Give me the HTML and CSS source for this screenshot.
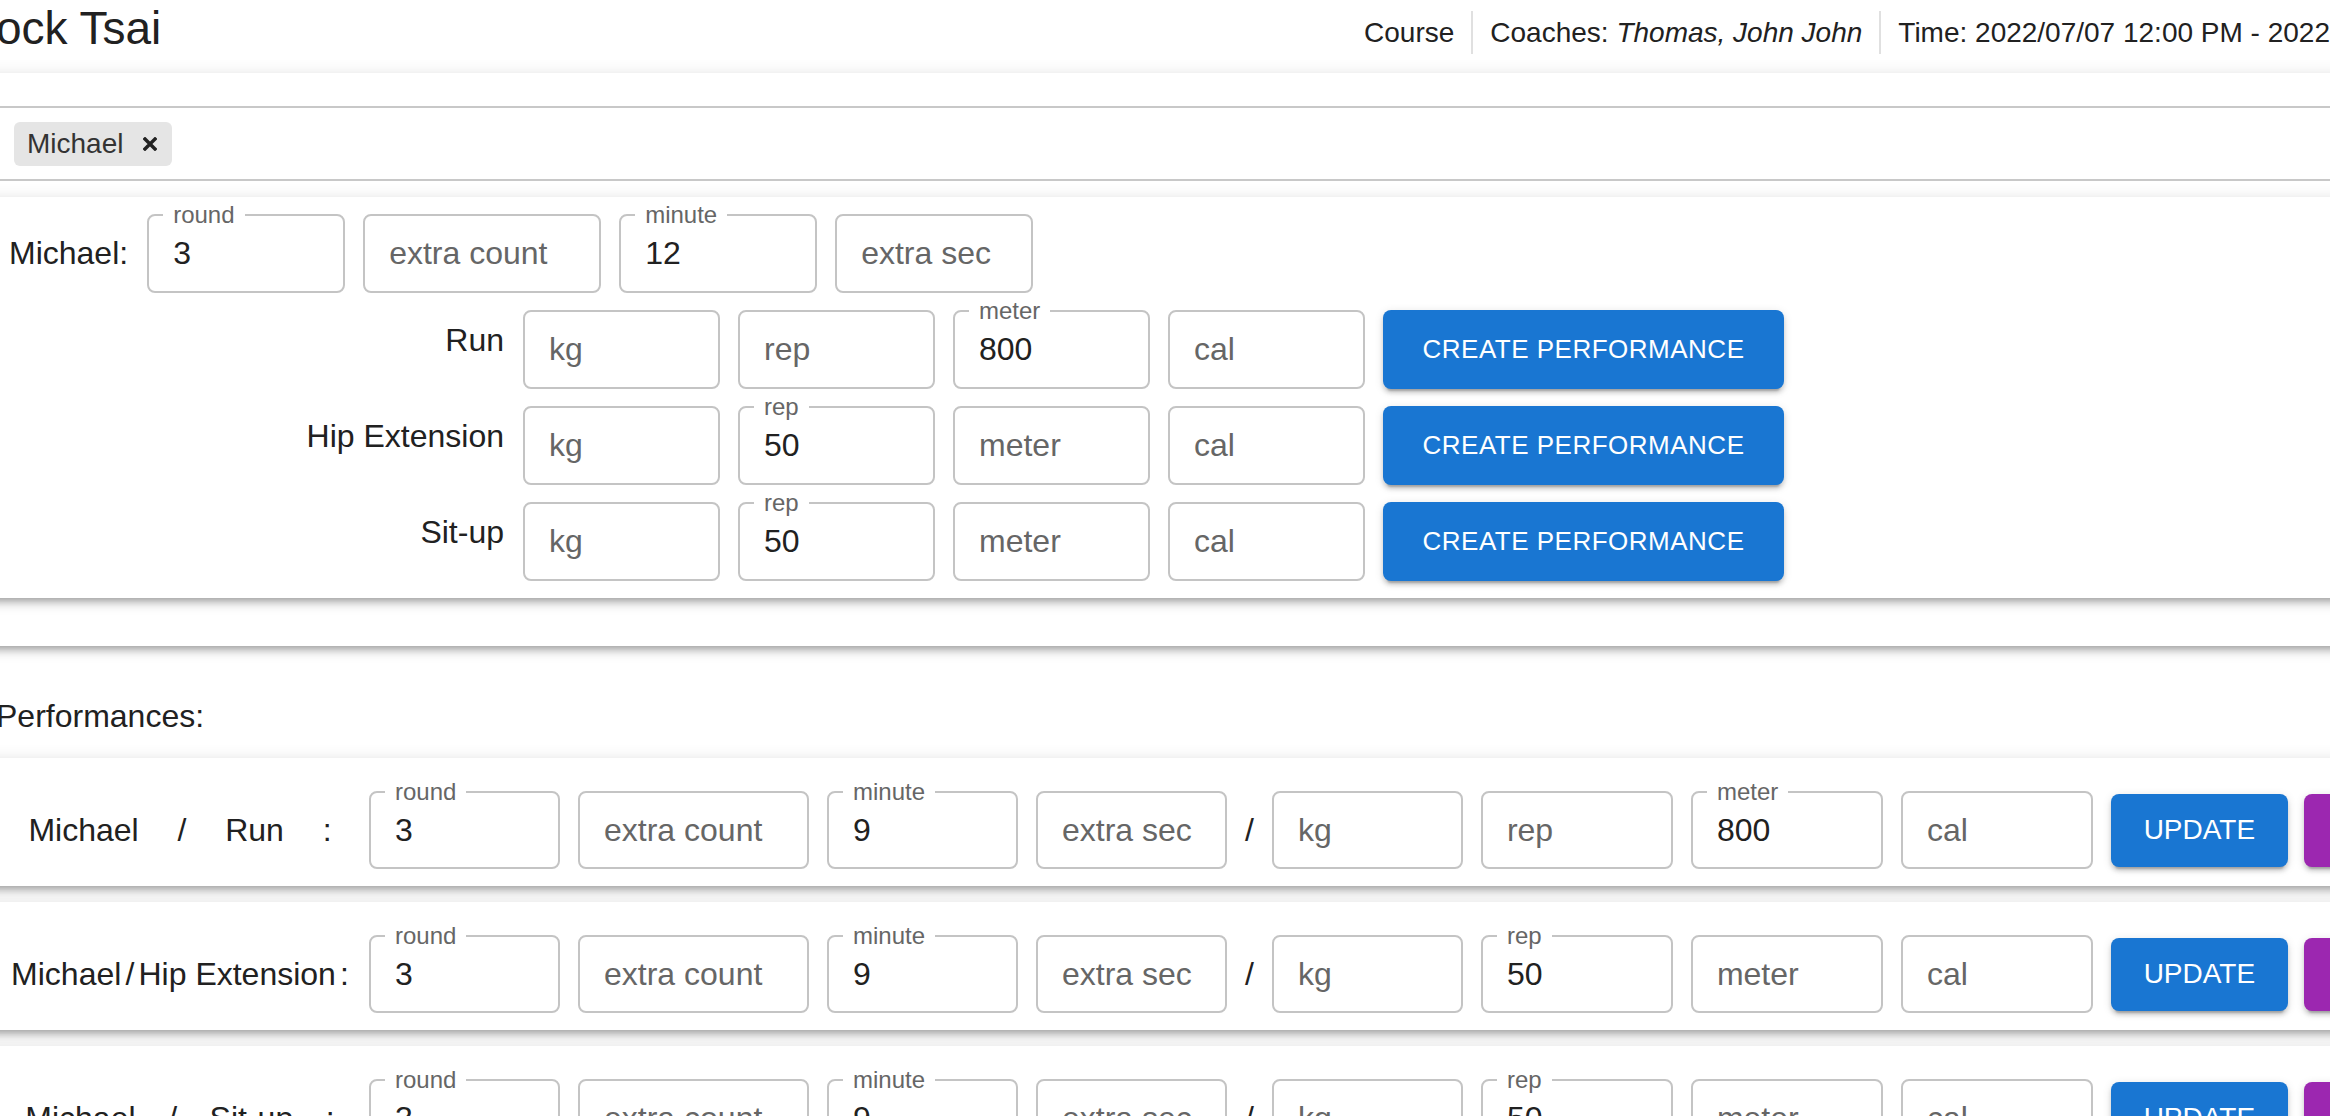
FILE: index.html
```html
<!DOCTYPE html>
<html lang="en">
<head>
<meta charset="utf-8">
<title>Course</title>
<link rel="stylesheet" href="styles.css">
</head>
<body>
<header class="topbar">
  <h1 class="title">ock Tsai</h1>
  <div class="meta">
    <span class="meta-item">Course</span>
    <span class="meta-item">Coaches: <em>Thomas, John John</em></span>
    <span class="meta-item">Time: 2022/07/07 12:00 PM - 2022</span>
  </div>
</header>
<main class="page">
  <section class="paper outer">
    <div class="autocomplete">
      <span class="chip">Michael<svg class="chip-x" width="14" height="14" viewBox="0 0 14 14"><path d="M2 2 L12 12 M12 2 L2 12" stroke="#222" stroke-width="3.4" stroke-linecap="square" fill="none"/></svg></span>
    </div>
    <div class="paper inner">
      <div class="row">
        <span class="athlete-label">Michael:</span>
        <div class="field w198"><span class="fl">round</span><span class="fv">3</span></div>
        <div class="field w238"><span class="fp">extra count</span></div>
        <div class="field w198"><span class="fl">minute</span><span class="fv">12</span></div>
        <div class="field w198"><span class="fp">extra sec</span></div>
      </div>
      <div class="row">
        <span class="ex-label">Run</span>
        <div class="field w197"><span class="fp">kg</span></div>
        <div class="field w197"><span class="fp">rep</span></div>
        <div class="field w197"><span class="fl">meter</span><span class="fv">800</span></div>
        <div class="field w197"><span class="fp">cal</span></div>
        <button class="btn btn-create">Create Performance</button>
      </div>
      <div class="row">
        <span class="ex-label">Hip Extension</span>
        <div class="field w197"><span class="fp">kg</span></div>
        <div class="field w197"><span class="fl">rep</span><span class="fv">50</span></div>
        <div class="field w197"><span class="fp">meter</span></div>
        <div class="field w197"><span class="fp">cal</span></div>
        <button class="btn btn-create">Create Performance</button>
      </div>
      <div class="row">
        <span class="ex-label">Sit-up</span>
        <div class="field w197"><span class="fp">kg</span></div>
        <div class="field w197"><span class="fl">rep</span><span class="fv">50</span></div>
        <div class="field w197"><span class="fp">meter</span></div>
        <div class="field w197"><span class="fp">cal</span></div>
        <button class="btn btn-create">Create Performance</button>
      </div>
    </div>
  </section>

  <h2 class="perf-title">Performances:</h2>

  <div class="paper perf-card">
    <div class="perf-name"><span>Michael</span><span>/</span><span>Run</span><span>:</span></div>
    <div class="field pf w191"><span class="fl">round</span><span class="fv">3</span></div>
    <div class="field pf w231"><span class="fp">extra count</span></div>
    <div class="field pf w191"><span class="fl">minute</span><span class="fv">9</span></div>
    <div class="field pf w191"><span class="fp">extra sec</span></div>
    <span class="slash">/</span>
    <div class="field pf w191"><span class="fp">kg</span></div>
    <div class="field pf w192"><span class="fp">rep</span></div>
    <div class="field pf w192"><span class="fl">meter</span><span class="fv">800</span></div>
    <div class="field pf w192"><span class="fp">cal</span></div>
    <button class="btn btn-update">Update</button>
    <button class="btn btn-delete" aria-label="delete"></button>
  </div>

  <div class="paper perf-card">
    <div class="perf-name"><span>Michael</span><span>/</span><span>Hip Extension</span><span>:</span></div>
    <div class="field pf w191"><span class="fl">round</span><span class="fv">3</span></div>
    <div class="field pf w231"><span class="fp">extra count</span></div>
    <div class="field pf w191"><span class="fl">minute</span><span class="fv">9</span></div>
    <div class="field pf w191"><span class="fp">extra sec</span></div>
    <span class="slash">/</span>
    <div class="field pf w191"><span class="fp">kg</span></div>
    <div class="field pf w192"><span class="fl">rep</span><span class="fv">50</span></div>
    <div class="field pf w192"><span class="fp">meter</span></div>
    <div class="field pf w192"><span class="fp">cal</span></div>
    <button class="btn btn-update">Update</button>
    <button class="btn btn-delete" aria-label="delete"></button>
  </div>

  <div class="paper perf-card">
    <div class="perf-name"><span>Michael</span><span>/</span><span>Sit-up</span><span>:</span></div>
    <div class="field pf w191"><span class="fl">round</span><span class="fv">3</span></div>
    <div class="field pf w231"><span class="fp">extra count</span></div>
    <div class="field pf w191"><span class="fl">minute</span><span class="fv">9</span></div>
    <div class="field pf w191"><span class="fp">extra sec</span></div>
    <span class="slash">/</span>
    <div class="field pf w191"><span class="fp">kg</span></div>
    <div class="field pf w192"><span class="fl">rep</span><span class="fv">50</span></div>
    <div class="field pf w192"><span class="fp">meter</span></div>
    <div class="field pf w192"><span class="fp">cal</span></div>
    <button class="btn btn-update">Update</button>
    <button class="btn btn-delete" aria-label="delete"></button>
  </div>
</main>
</body>
</html>
```

FILE: styles.css
```css
* { box-sizing: border-box; }
html, body { margin: 0; padding: 0; }
body {
  width: 2330px;
  height: 1116px;
  overflow: hidden;
  background: #fff;
  color: #212121;
  font-family: "Liberation Sans", Arial, Helvetica, sans-serif;
}

/* header */
.topbar {
  display: flex;
  align-items: flex-start;
  height: 73px;
}
.title {
  margin: 0 0 0 -4px;
  font-size: 46px;
  font-weight: 400;
  line-height: 56px;
  white-space: nowrap;
}
.meta {
  margin-left: auto;
  margin-top: 11px;
  display: flex;
  white-space: nowrap;
}
.meta-item {
  font-size: 28px;
  line-height: 43px;
  padding: 0 17px;
}
.meta-item + .meta-item { border-left: 2px solid #e0e0e0; }
.meta-item:last-child { padding-right: 0; }

/* page */
.page { margin: 0 -400px 0 -40px; }
.paper {
  background: #fff;
  box-shadow: 0 6px 6px -4px rgba(0,0,0,0.2), 0 6px 8px 0 rgba(0,0,0,0.14), 0 2px 16px 0 rgba(0,0,0,0.12);
}
.outer { padding: 33px 20px 48px 20px; }

.autocomplete {
  display: flex;
  border: 2px solid #c8c8c8;
  border-radius: 8px;
  padding: 14px 0 13px 32px;
}
.chip {
  display: inline-flex;
  align-items: center;
  gap: 20px;
  height: 44px;
  padding: 0 15px 0 13px;
  background: #e5e5e5;
  border-radius: 6px;
  font-size: 28px;
  line-height: 44px;
  color: #333;
}
.chip-x { display: block; flex: none; }

.inner {
  margin-top: 16px;
  padding: 17px 0 17px 29px;
  display: flex;
  flex-direction: column;
  gap: 17px;
}
.row {
  display: flex;
  align-items: center;
  gap: 18px;
}
.athlete-label {
  font-size: 32px;
  margin-right: 1px;
  white-space: nowrap;
}
.ex-label {
  flex: none;
  width: 495px;
  margin-right: 1px;
  padding-bottom: 19px;
  text-align: right;
  font-size: 32px;
  white-space: nowrap;
}

/* outlined fields */
.field {
  position: relative;
  flex: none;
  height: 79px;
  display: flex;
  align-items: center;
  padding: 0 24px;
  border: 2px solid #c4c4c4;
  border-radius: 8px;
  background: #fff;
}
.field.pf { height: 78px; }
.w191 { width: 191px; }
.w192 { width: 192px; }
.w197 { width: 197px; }
.w198 { width: 198px; }
.w231 { width: 231px; }
.w238 { width: 238px; }
.fl {
  position: absolute;
  left: 14px;
  top: -13px;
  padding: 0 10px;
  background: #fff;
  font-size: 24px;
  line-height: 24px;
  color: #666;
  white-space: nowrap;
}
.fv { font-size: 32px; color: #212121; white-space: nowrap; }
.fp { font-size: 32px; color: #666; white-space: nowrap; }

/* buttons */
.btn {
  flex: none;
  border: none;
  padding: 0;
  border-radius: 8px;
  color: #fff;
  font-family: inherit;
  text-transform: uppercase;
  cursor: pointer;
  box-shadow: 0 6px 2px -4px rgba(0,0,0,0.2), 0 4px 4px 0 rgba(0,0,0,0.14), 0 2px 10px 0 rgba(0,0,0,0.12);
}
.btn-create {
  width: 401px;
  height: 79px;
  font-size: 26px;
  letter-spacing: 0.5px;
  background: #1976d2;
}
.btn-update {
  width: 177px;
  height: 73px;
  font-size: 28px;
  background: #1976d2;
}
.btn-delete {
  width: 200px;
  height: 73px;
  margin-left: -2px;
  background: #9c27b0;
}

/* performances */
.perf-title {
  margin: 52px 0 24px 36px;
  font-size: 32px;
  font-weight: 400;
  line-height: 36px;
}
.perf-card {
  height: 128px;
  margin-bottom: 16px;
  padding: 33px 0 17px 49px;
  display: flex;
  align-items: center;
  gap: 18px;
}
.perf-name {
  flex: none;
  width: 342px;
  display: flex;
  justify-content: space-around;
  font-size: 32px;
  white-space: nowrap;
}
.slash { flex: none; font-size: 32px; }
```
